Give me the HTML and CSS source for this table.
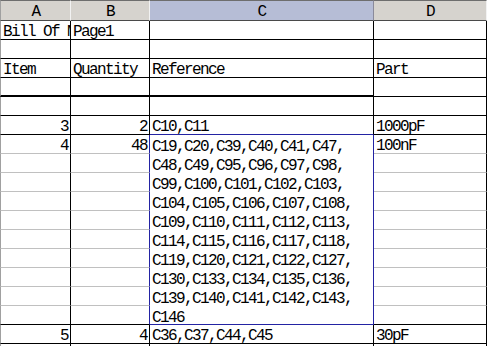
FILE: index.html
```html
<!DOCTYPE html>
<html lang="en">
<head>
<meta charset="utf-8">
<title>Bill Of Materials</title>
<link rel="stylesheet" href="styles.css">
</head>
<body>
<table class="sheet">
  <colgroup>
    <col class="col-a">
    <col class="col-b">
    <col class="col-c">
    <col class="col-d">
  </colgroup>
  <thead>
    <tr class="head">
      <th class="first">A</th>
      <th>B</th>
      <th class="active">C</th>
      <th>D</th>
    </tr>
  </thead>
  <tbody>
    <tr>
      <td class="first">Bill Of Materials</td>
      <td>Page1</td>
      <td></td>
      <td></td>
    </tr>
    <tr>
      <td class="first"></td>
      <td></td>
      <td></td>
      <td></td>
    </tr>
    <tr>
      <td class="first">Item</td>
      <td>Quantity</td>
      <td>Reference</td>
      <td>Part</td>
    </tr>
    <tr class="rule">
      <td class="first thick"></td>
      <td class="thick"></td>
      <td class="thick"></td>
      <td></td>
    </tr>
    <tr>
      <td class="first"></td>
      <td></td>
      <td></td>
      <td></td>
    </tr>
    <tr>
      <td class="first num">3</td>
      <td class="num">2</td>
      <td class="above-sel">C10,C11</td>
      <td>1000pF</td>
    </tr>
    <tr>
      <td class="first num soft">4</td>
      <td class="num soft left-of-sel">48</td>
      <td class="refs" rowspan="10">
        <div class="lines">C19,C20,C39,C40,C41,C47,<br>C48,C49,C95,C96,C97,C98,<br>C99,C100,C101,C102,C103,<br>C104,C105,C106,C107,C108,<br>C109,C110,C111,C112,C113,<br>C114,C115,C116,C117,C118,<br>C119,C120,C121,C122,C127,<br>C130,C133,C134,C135,C136,<br>C139,C140,C141,C142,C143,<br>C146</div>
      </td>
      <td class="soft">100nF</td>
    </tr>
    <tr><td class="first soft"></td><td class="soft left-of-sel"></td><td class="soft"></td></tr>
    <tr><td class="first soft"></td><td class="soft left-of-sel"></td><td class="soft"></td></tr>
    <tr><td class="first soft"></td><td class="soft left-of-sel"></td><td class="soft"></td></tr>
    <tr><td class="first soft"></td><td class="soft left-of-sel"></td><td class="soft"></td></tr>
    <tr><td class="first soft"></td><td class="soft left-of-sel"></td><td class="soft"></td></tr>
    <tr><td class="first soft"></td><td class="soft left-of-sel"></td><td class="soft"></td></tr>
    <tr><td class="first soft"></td><td class="soft left-of-sel"></td><td class="soft"></td></tr>
    <tr><td class="first soft"></td><td class="soft left-of-sel"></td><td class="soft"></td></tr>
    <tr><td class="first"></td><td class="left-of-sel"></td><td></td></tr>
    <tr>
      <td class="first num">5</td>
      <td class="num">4</td>
      <td>C36,C37,C44,C45</td>
      <td>30pF</td>
    </tr>
    <tr>
      <td class="first soft"></td>
      <td class="soft"></td>
      <td class="soft"></td>
      <td class="soft"></td>
    </tr>
  </tbody>
</table>
</body>
</html>
```

FILE: styles.css
```css
html,
body {
  margin: 0;
  background: #ffffff;
}

body {
  width: 488px;
  height: 346px;
  overflow: hidden;
}

/* worksheet grid */
.sheet {
  border-collapse: separate;
  border-spacing: 0;
  table-layout: fixed;
  width: 487px;
  font-family: "Liberation Mono", "Courier New", monospace;
  font-size: 16px;
  letter-spacing: -1.6px;
  color: #000000;
}

.col-a { width: 71px; }
.col-b { width: 79px; }
.col-c { width: 224px; }
.col-d { width: 113px; }

/* column letters */
.head {
  height: 21px;
}

.head th {
  padding: 4px 0 0;
  line-height: 14px;
  font-weight: normal;
  text-align: center;
  vertical-align: top;
  background: #d6d3ce;
  border-top: 1px solid #6e6e6e;
  border-bottom: 1px solid #4a4a4a;
  border-right: 1px solid #f2f2f2;
}

.head th.first {
  border-left: 1px solid #a0a0a0;
}

.head th.active {
  background: #b6bdd6;
  border-right-color: #8a8a9a;
}

/* cells */
tbody tr {
  height: 19px;
}

td {
  padding: 5px 2px 0;
  line-height: 13px;
  vertical-align: top;
  white-space: nowrap;
  overflow: hidden;
  border-right: 1px solid #000000;
  border-bottom: 1px solid #000000;
}

td.first {
  border-left: 1px solid #a0a0a0;
}

td.num {
  text-align: right;
}

td.soft {
  border-bottom-color: #c0c0c0;
}

td.thick {
  border-bottom-width: 2px;
}

/* selected merged cell */
td.above-sel {
  border-bottom-color: #2323a3;
}

td.left-of-sel {
  border-right-color: #2323a3;
}

td.refs {
  padding: 0 2px;
  overflow: visible;
  border-right-color: #2323a3;
  border-bottom-color: #2323a3;
}

.refs .lines {
  height: 189px;
  padding-top: 3px;
  box-sizing: border-box;
  line-height: 19px;
}
```
